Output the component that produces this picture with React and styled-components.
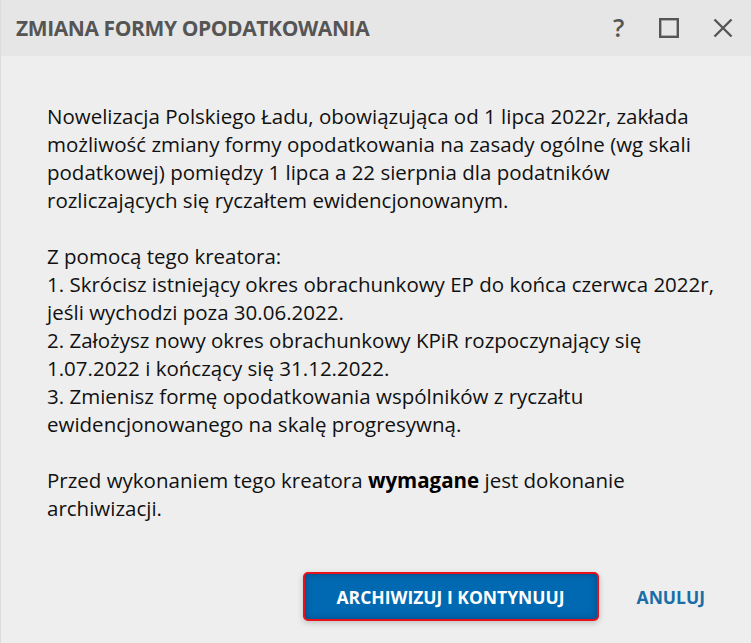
import React from 'react'
import styled, { createGlobalStyle } from 'styled-components'

const GlobalStyle = createGlobalStyle`
  html, body {
    margin: 0;
    padding: 0;
    background: #eeeeee;
  }
  * {
    box-sizing: border-box;
  }
`

export default function App() {
  return (
    <Window>
      <GlobalStyle />
      <TitleBar>
        <Title>ZMIANA FORMY OPODATKOWANIA</Title>
        <Controls>
          <HelpIcon>?</HelpIcon>
          <IconButton>
            <svg width="20" height="20" viewBox="0 0 20 20">
              <rect x="1.2" y="1.2" width="17.6" height="17.6" fill="none" stroke="#555" strokeWidth="2.4" />
            </svg>
          </IconButton>
          <IconButton>
            <svg width="20" height="20" viewBox="0 0 20 20">
              <path d="M1.5 1.5 L18.5 18.5 M18.5 1.5 L1.5 18.5" stroke="#555" strokeWidth="2.4" />
            </svg>
          </IconButton>
        </Controls>
      </TitleBar>

      <Content>
        <Paragraph>
          Nowelizacja Polskiego Ładu, obowiązująca od 1 lipca 2022r, zakłada
          <br />
          możliwość zmiany formy opodatkowania na zasady ogólne (wg skali
          <br />
          podatkowej) pomiędzy 1 lipca a 22 sierpnia dla podatników
          <br />
          rozliczających się ryczałtem ewidencjonowanym.
        </Paragraph>
        <Paragraph>
          Z pomocą tego kreatora:
          <br />
          1. Skrócisz istniejący okres obrachunkowy EP do końca czerwca 2022r,
          <br />
          jeśli wychodzi poza 30.06.2022.
          <br />
          2. Założysz nowy okres obrachunkowy KPiR rozpoczynający się
          <br />
          1.07.2022 i kończący się 31.12.2022.
          <br />
          3. Zmienisz formę opodatkowania wspólników z ryczałtu
          <br />
          ewidencjonowanego na skalę progresywną.
        </Paragraph>
        <Paragraph>
          Przed wykonaniem tego kreatora <strong>wymagane</strong> jest dokonanie
          <br />
          archiwizacji.
        </Paragraph>
      </Content>

      <Footer>
        <PrimaryButton>ARCHIWIZUJ I KONTYNUUJ</PrimaryButton>
        <TextButton>ANULUJ</TextButton>
      </Footer>
    </Window>
  )
}

const Window = styled.div`
  display: flex;
  flex-direction: column;
  height: 643px;
  background: #eeeeee;
  border-left: 1px solid #dddddd;
  font-family: 'Open Sans', 'Noto Sans', sans-serif;
`

const TitleBar = styled.header`
  display: flex;
  align-items: center;
  justify-content: space-between;
  height: 56px;
  padding: 0 18px 0 15px;
  background: #e6e6e6;
`

const Title = styled.h1`
  margin: 0;
  font-size: 21px;
  font-weight: 700;
  letter-spacing: -0.4px;
  color: #555555;
`

const Controls = styled.div`
  display: flex;
  align-items: center;
  gap: 34px;
`

const HelpIcon = styled.span`
  font-size: 25px;
  font-weight: 600;
  color: #555555;
  line-height: 1;
  width: 12px;
  margin-top: -2px;
`

const IconButton = styled.span`
  display: flex;
  align-items: center;
  justify-content: center;
  width: 20px;
  height: 20px;
`

const Content = styled.main`
  padding: 46px 20px 0 46px;
  font-size: 20.5px;
  line-height: 28px;
  color: #111111;
  white-space: nowrap;
`

const Paragraph = styled.p`
  margin: 0 0 28px;

  strong {
    font-weight: 700;
    color: #000;
  }
`

const Footer = styled.footer`
  margin-top: auto;
  display: flex;
  justify-content: flex-end;
  align-items: center;
  gap: 22px;
  padding: 0 30px 22px 0;
`

const PrimaryButton = styled.button`
  width: 296px;
  height: 49px;
  border: 2px solid #e8111b;
  border-radius: 5px;
  background: #0069b1;
  box-shadow: inset 0 0 6px rgba(0, 40, 80, 0.5), 0 2px 6px rgba(0, 0, 0, 0.2);
  color: #ffffff;
  font-family: inherit;
  font-size: 17.5px;
  font-weight: 700;
  cursor: pointer;
`

const TextButton = styled.button`
  border: none;
  background: none;
  padding: 8px 16px;
  color: #1a6ea8;
  font-family: inherit;
  font-size: 17.5px;
  font-weight: 700;
  cursor: pointer;
`
